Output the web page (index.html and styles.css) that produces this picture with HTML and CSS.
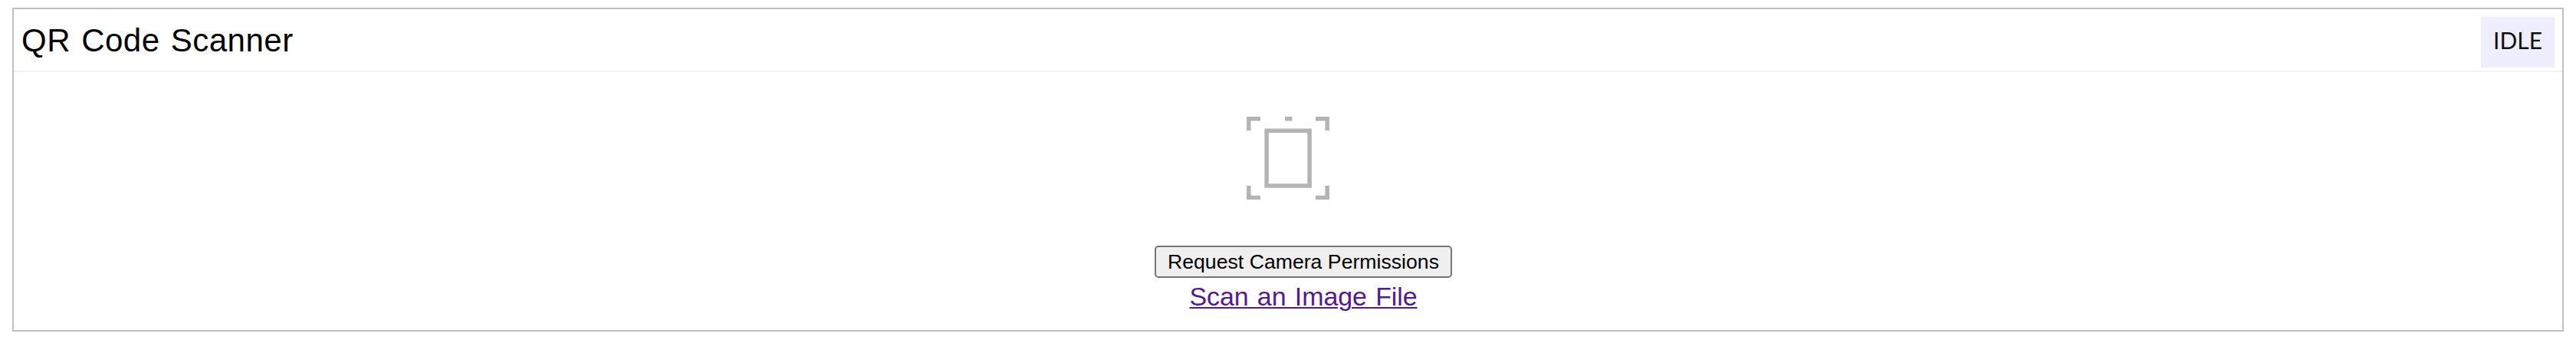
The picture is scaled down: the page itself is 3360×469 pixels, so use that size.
FILE: index.html
```html
<!DOCTYPE html>
<html lang="en">
<head>
<meta charset="utf-8">
<title>QR Code Scanner</title>
<link rel="stylesheet" href="styles.css">
</head>
<body>
<main class="scanner">
  <header class="header">
    <span class="title">QR Code Scanner</span>
    <span class="status">IDLE</span>
  </header>
  <section class="region">
    <svg class="icon" viewBox="0 0 128 128" fill="none" stroke="#b4b4b4" stroke-width="5.5" aria-hidden="true">
      <path d="M28 22.8H12.8V38M100 22.8h15.2V38M12.8 110v15.4H28M100 125.4h15.2V110M60 22.8h9.5"/>
      <path d="M36.1 38.3h56v71.6h-56z"/>
    </svg>
    <div class="controls">
      <button class="request" type="button">Request Camera Permissions</button>
      <a class="file-link" href="#">Scan an Image File</a>
    </div>
  </section>
</main>
</body>
</html>
```
FILE: styles.css
```css
body {
  margin: 0;
  padding: 10px 16px;
  background: #fff;
  color: #000;
  font-family: "Liberation Sans", Arial, sans-serif;
}

.scanner {
  box-sizing: border-box;
  height: 422px;
  border: 2px solid #c0c0c0;
}

.header {
  box-sizing: border-box;
  display: flex;
  justify-content: space-between;
  align-items: flex-start;
  height: 82px;
  padding: 10px;
  border-bottom: 2px solid #f2f2f2;
}

.title {
  font-size: 42px;
  line-height: 62px;
  letter-spacing: 0.5px;
  word-spacing: 2px;
  white-space: nowrap;
}

.status {
  width: 96px;
  height: 66px;
  background: #eeeeff;
  color: #111;
  font-family: Lato, sans-serif;
  font-size: 30px;
  line-height: 60px;
  text-align: center;
}

.region {
  display: flex;
  flex-direction: column;
  align-items: center;
  padding-top: 38px;
}

.icon {
  width: 128px;
  height: 128px;
}

.controls {
  display: flex;
  flex-direction: column;
  align-items: center;
  padding: 60px 0 0 40px;
}

.request {
  box-sizing: border-box;
  width: 388px;
  height: 42px;
  padding: 0;
  border: 2px solid #767676;
  border-radius: 5px;
  background: #efefef;
  color: #000;
  font: 26.67px/38px "Liberation Sans", Arial, sans-serif;
  white-space: nowrap;
}

.file-link {
  margin-top: 4px;
  color: #551a8b;
  font-size: 34px;
  line-height: 40px;
  letter-spacing: -0.1px;
  word-spacing: 2px;
  text-decoration-thickness: 2px;
  text-underline-offset: 2px;
  white-space: nowrap;
}
```
